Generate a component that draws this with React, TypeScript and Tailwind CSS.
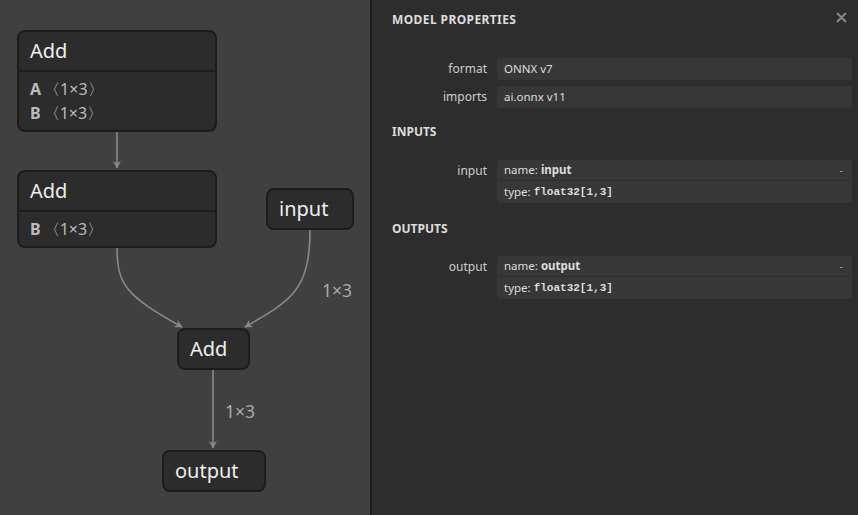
import React from "react";

const font = { fontFamily: '"Noto Sans", "Open Sans", sans-serif' };

type Attr = { name: string; value: string };

const Node = ({ x, y, w, title, attrs }: { x: number; y: number; w: number; title: string; attrs?: Attr[] }) => (
  <div
    className="absolute rounded-[8px] border-2 border-[#1c1c1c] bg-[#2c2c2c] text-[#eeeeee]"
    style={{ left: x, top: y, width: w }}
  >
    <div className="h-[38px] flex items-center px-[11px] text-[20px]">{title}</div>
    {attrs && (
      <div className="border-t-2 border-[#1c1c1c] px-[11px] pt-[5px] pb-[5px] flex flex-col">
        {attrs.map((a) => (
          <div key={a.name} className="h-[24px] flex items-center text-[16px] text-[#bbbbbb]">
            <span className="font-bold">{a.name}</span>
            <span className="ml-[3px]">〈{a.value}〉</span>
          </div>
        ))}
      </div>
    )}
  </div>
);

const Edges = () => (
  <svg className="absolute left-0 top-0" width="370" height="515">
    <defs>
      <marker id="arrow" viewBox="0 0 10 10" refX="9" refY="5" markerWidth="8" markerHeight="8" orient="auto-start-reverse" markerUnits="userSpaceOnUse">
        <path d="M0,0 L10,5 L0,10 L3,5 Z" fill="#888888" />
      </marker>
    </defs>
    <g stroke="#888888" strokeWidth="1.6" fill="none">
      <path d="M117,131 L117,168" markerEnd="url(#arrow)" />
      <path d="M117,246 C117,285 125,295 182,327" markerEnd="url(#arrow)" />
      <path d="M310,229 C310,290 292,300 245,327" markerEnd="url(#arrow)" />
      <path d="M213,369 L213,448" markerEnd="url(#arrow)" />
    </g>
  </svg>
);

const Prop = ({ label, children }: { label: string; children: React.ReactNode }) => (
  <div className="flex">
    <div className="w-[95px] shrink-0 text-right text-[12px] text-[#cccccc] leading-[21px]">{label}</div>
    <div className="ml-[10px] flex-1 rounded-[3px] bg-[#373737] text-[11.5px] text-[#dddddd]">{children}</div>
  </div>
);

const TensorBox = ({ name }: { name: string }) => (
  <div className="flex flex-col">
    <div className="h-[21px] flex items-center px-[7px] border-b border-[#2e2e2e]">
      <span>name:&nbsp;</span>
      <span className="font-bold">{name}</span>
      <span className="ml-auto text-[#999999] pr-[2px]">-</span>
    </div>
    <div className="h-[22px] flex items-center px-[7px]">
      <span>type:&nbsp;</span>
      <span className="font-bold text-[11px]" style={{ fontFamily: '"Liberation Mono", monospace' }}>float32[1,3]</span>
    </div>
  </div>
);

export default function App() {
  return (
    <div className="w-[858px] h-[515px] flex overflow-hidden" style={font}>
      <div className="relative w-[370px] h-full bg-[#404040] shrink-0">
        <Edges />
        <Node x={17} y={30} w={200} title="Add" attrs={[{ name: "A", value: "1×3" }, { name: "B", value: "1×3" }]} />
        <Node x={17} y={170} w={200} title="Add" attrs={[{ name: "B", value: "1×3" }]} />
        <Node x={266} y={188} w={88} title="input" />
        <Node x={177} y={328} w={73} title="Add" />
        <Node x={162} y={450} w={104} title="output" />
        <span className="absolute left-[322px] top-[277px] text-[17.5px] text-[#aaaaaa]">1×3</span>
        <span className="absolute left-[225px] top-[398px] text-[17.5px] text-[#aaaaaa]">1×3</span>
      </div>
      <div className="w-[2px] h-full bg-[#1e1e1e] shrink-0" />
      <div className="relative flex-1 h-full bg-[#2d2d2d] pl-[20px] pr-[6px]">
        <div className="absolute right-[11px] top-[12px]">
          <svg width="11" height="11" viewBox="0 0 11 11">
            <path d="M1,1 L10,10 M10,1 L1,10" stroke="#888888" strokeWidth="2" />
          </svg>
        </div>
        <div className="pt-[12px] h-[28px] text-[12px] font-bold text-[#dddddd] leading-[16px] tracking-[0.4px]">MODEL PROPERTIES</div>
        <div className="mt-[30px] flex flex-col gap-[6px]">
          <Prop label="format">
            <div className="h-[22px] flex items-center px-[7px]">ONNX v7</div>
          </Prop>
          <Prop label="imports">
            <div className="h-[22px] flex items-center px-[7px]">ai.onnx v11</div>
          </Prop>
        </div>
        <div className="mt-[16px] h-[16px] text-[12px] font-bold text-[#dddddd] leading-[16px]">INPUTS</div>
        <div className="mt-[20px]">
          <Prop label="input">
            <TensorBox name="input" />
          </Prop>
        </div>
        <div className="mt-[18px] h-[16px] text-[12px] font-bold text-[#dddddd] leading-[16px]">OUTPUTS</div>
        <div className="mt-[19px]">
          <Prop label="output">
            <TensorBox name="output" />
          </Prop>
        </div>
      </div>
    </div>
  );
}
